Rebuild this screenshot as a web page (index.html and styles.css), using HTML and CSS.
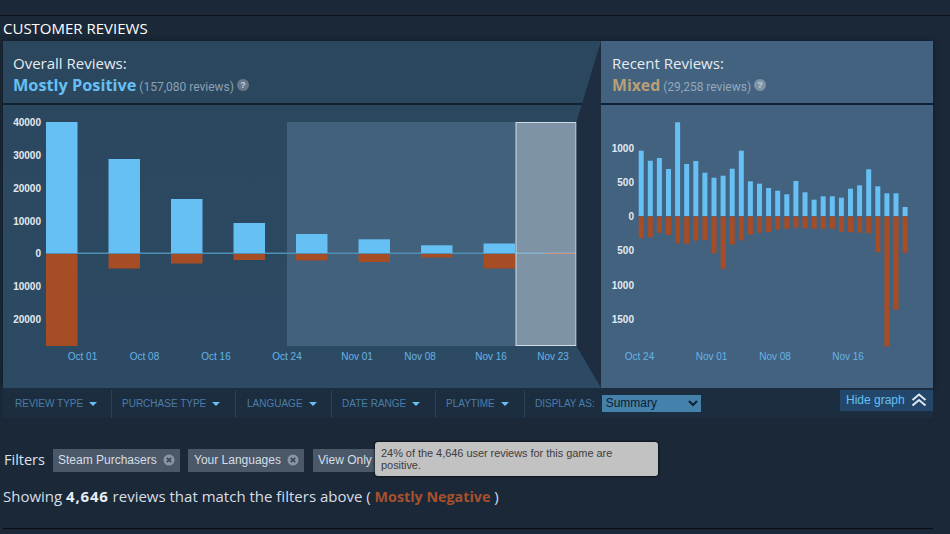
FILE: index.html
```html
<!DOCTYPE html>
<html lang="en">
<head>
<meta charset="utf-8">
<title>Customer Reviews</title>
<link rel="stylesheet" href="styles.css">
</head>
<body>
<main class="page">
  <h2 class="title">Customer Reviews</h2>
  <section class="graph">
    <div class="panels">
      <div class="panel overall">
        <header class="panel-head">
          <div class="panel-label">Overall Reviews:</div>
          <div class="summary"><span class="score positive">Mostly Positive</span> <span class="count">(157,080 reviews)</span> <span class="help">?</span></div>
        </header>
        <svg class="chart" viewBox="3 105 598 283" width="598" height="283">
          <rect class="range" x="287" y="122" width="289.5" height="224"/>
          <rect class="zero" x="46" y="252.5" width="530" height="1.5"/>
          <g class="up">
            <rect x="46" y="122" width="31.5" height="131"/>
            <rect x="108.5" y="159" width="31.5" height="94"/>
            <rect x="171" y="199" width="31.5" height="54"/>
            <rect x="233.5" y="223" width="31.5" height="30"/>
            <rect x="296" y="234" width="31.5" height="19"/>
            <rect x="358.5" y="239.3" width="31.5" height="13.7"/>
            <rect x="421" y="245.3" width="31.5" height="7.7"/>
            <rect x="483.5" y="243.5" width="31.5" height="9.5"/>
          </g>
          <g class="down">
            <rect x="46" y="254" width="31.5" height="92"/>
            <rect x="108.5" y="254" width="31.5" height="14.5"/>
            <rect x="171" y="254" width="31.5" height="9.5"/>
            <rect x="233.5" y="254" width="31.5" height="6"/>
            <rect x="296" y="254" width="31.5" height="6.5"/>
            <rect x="358.5" y="254" width="31.5" height="8"/>
            <rect x="421" y="254" width="31.5" height="3.5"/>
            <rect x="483.5" y="254" width="31.5" height="14.5"/>
          </g>
          <rect class="tiny" x="545" y="253" width="31" height="1"/>
          <rect class="selection" x="516" y="122.5" width="60" height="223"/>
          <g class="y-labels" text-anchor="end">
            <text x="41" y="126">40000</text>
            <text x="41" y="159">30000</text>
            <text x="41" y="192">20000</text>
            <text x="41" y="225">10000</text>
            <text x="41" y="257">0</text>
            <text x="41" y="290">10000</text>
            <text x="41" y="323">20000</text>
          </g>
          <g class="x-labels" text-anchor="middle">
            <text x="82.5" y="360">Oct 01</text>
            <text x="144.5" y="360">Oct 08</text>
            <text x="216" y="360">Oct 16</text>
            <text x="287" y="360">Oct 24</text>
            <text x="357" y="360">Nov 01</text>
            <text x="420" y="360">Nov 08</text>
            <text x="491" y="360">Nov 16</text>
            <text x="553" y="360">Nov 23</text>
          </g>
        </svg>
        <svg class="wedge" viewBox="3 41 598 347" width="598" height="347" aria-hidden="true">
          <polygon points="601,41 576.5,122 576.5,346 601,388"/>
        </svg>
      </div>
      <div class="panel recent">
        <header class="panel-head">
          <div class="panel-label">Recent Reviews:</div>
          <div class="summary"><span class="score mixed">Mixed</span> <span class="count">(29,258 reviews)</span> <span class="help">?</span></div>
        </header>
        <svg class="chart" viewBox="601 105 332 283" width="332" height="283">
          <g class="up">
            <rect x="638.7" y="150.7" width="5" height="65.3"/>
            <rect x="647.8" y="160.7" width="5" height="55.3"/>
            <rect x="656.9" y="158" width="5" height="58"/>
            <rect x="666" y="169" width="5" height="47"/>
            <rect x="675.1" y="122.3" width="5" height="93.7"/>
            <rect x="684.2" y="164" width="5" height="52"/>
            <rect x="693.3" y="161" width="5" height="55"/>
            <rect x="702.4" y="172.7" width="5" height="43.3"/>
            <rect x="711.5" y="177.7" width="5" height="38.3"/>
            <rect x="720.6" y="175.7" width="5" height="40.3"/>
            <rect x="729.7" y="168.7" width="5" height="47.3"/>
            <rect x="738.8" y="150.7" width="5" height="65.3"/>
            <rect x="747.9" y="181.3" width="5" height="34.7"/>
            <rect x="757" y="183.7" width="5" height="32.3"/>
            <rect x="766.1" y="188" width="5" height="28"/>
            <rect x="775.2" y="190.7" width="5" height="25.3"/>
            <rect x="784.3" y="194.3" width="5" height="21.7"/>
            <rect x="793.4" y="181" width="5" height="35"/>
            <rect x="802.5" y="192.3" width="5" height="23.7"/>
            <rect x="811.6" y="199.7" width="5" height="16.3"/>
            <rect x="820.7" y="196.3" width="5" height="19.7"/>
            <rect x="829.8" y="196.3" width="5" height="19.7"/>
            <rect x="838.9" y="197.7" width="5" height="18.3"/>
            <rect x="848" y="188.7" width="5" height="27.3"/>
            <rect x="857.1" y="185.3" width="5" height="30.7"/>
            <rect x="866.2" y="169.3" width="5" height="46.7"/>
            <rect x="875.3" y="186.3" width="5" height="29.7"/>
            <rect x="884.4" y="193.3" width="5" height="22.7"/>
            <rect x="893.5" y="193.3" width="5" height="22.7"/>
            <rect x="902.6" y="207" width="5" height="9"/>
          </g>
          <g class="down">
            <rect x="638.7" y="216.5" width="5" height="21.7"/>
            <rect x="647.8" y="216.5" width="5" height="20.7"/>
            <rect x="656.9" y="216.5" width="5" height="16.3"/>
            <rect x="666" y="216.5" width="5" height="18.3"/>
            <rect x="675.1" y="216.5" width="5" height="26.7"/>
            <rect x="684.2" y="216.5" width="5" height="27.3"/>
            <rect x="693.3" y="216.5" width="5" height="24"/>
            <rect x="702.4" y="216.5" width="5" height="23.3"/>
            <rect x="711.5" y="216.5" width="5" height="36.7"/>
            <rect x="720.6" y="216.5" width="5" height="52.3"/>
            <rect x="729.7" y="216.5" width="5" height="28"/>
            <rect x="738.8" y="216.5" width="5" height="24"/>
            <rect x="747.9" y="216.5" width="5" height="18"/>
            <rect x="757" y="216.5" width="5" height="16.3"/>
            <rect x="766.1" y="216.5" width="5" height="15.7"/>
            <rect x="775.2" y="216.5" width="5" height="13"/>
            <rect x="784.3" y="216.5" width="5" height="12.3"/>
            <rect x="793.4" y="216.5" width="5" height="11.3"/>
            <rect x="802.5" y="216.5" width="5" height="11.7"/>
            <rect x="811.6" y="216.5" width="5" height="12.3"/>
            <rect x="820.7" y="216.5" width="5" height="12.3"/>
            <rect x="829.8" y="216.5" width="5" height="12.3"/>
            <rect x="838.9" y="216.5" width="5" height="15.7"/>
            <rect x="848" y="216.5" width="5" height="15.7"/>
            <rect x="857.1" y="216.5" width="5" height="16.3"/>
            <rect x="866.2" y="216.5" width="5" height="16.7"/>
            <rect x="875.3" y="216.5" width="5" height="35.7"/>
            <rect x="884.4" y="216.5" width="5" height="130"/>
            <rect x="893.5" y="216.5" width="5" height="93.3"/>
            <rect x="902.6" y="216.5" width="5" height="36.3"/>
          </g>
          <g class="y-labels" text-anchor="end">
            <text x="634" y="152">1000</text>
            <text x="634" y="186">500</text>
            <text x="634" y="220">0</text>
            <text x="634" y="254">500</text>
            <text x="634" y="289">1000</text>
            <text x="634" y="323">1500</text>
          </g>
          <g class="x-labels" text-anchor="middle">
            <text x="639.5" y="360">Oct 24</text>
            <text x="711.5" y="360">Nov 01</text>
            <text x="775" y="360">Nov 08</text>
            <text x="848" y="360">Nov 16</text>
          </g>
        </svg>
      </div>
    </div>
    <div class="filterbar">
      <div class="menu first">Review Type <span class="caret"></span></div>
      <div class="menu type">Purchase Type <span class="caret"></span></div>
      <div class="menu lang">Language <span class="caret"></span></div>
      <div class="menu range-menu">Date Range <span class="caret"></span></div>
      <div class="menu play">Playtime <span class="caret"></span></div>
      <div class="menu display">
        <span>Display As:</span>
        <select class="display-select"><option>Summary</option></select>
      </div>
      <div class="hide-graph">Hide graph
        <svg class="chevrons" viewBox="0 0 16 14" width="16" height="14" aria-hidden="true">
          <path d="M1.5 7 8 1.5 14.500 7M1.500 12.500 8 7l6.500 5.500"/>
        </svg>
      </div>
    </div>
  </section>
  <section class="filters">
    <span class="filters-label">Filters</span>
    <span class="tag">Steam Purchasers
      <svg class="close" viewBox="0 0 12 12" width="12" height="12" aria-hidden="true"><circle cx="6" cy="6" r="5.500"/><path d="M3.800 3.800l4.400 4.400M8.200 3.800 3.800 8.200"/></svg>
    </span>
    <span class="tag">Your Languages
      <svg class="close" viewBox="0 0 12 12" width="12" height="12" aria-hidden="true"><circle cx="6" cy="6" r="5.500"/><path d="M3.800 3.800l4.400 4.400M8.200 3.800 3.800 8.200"/></svg>
    </span>
    <span class="tag">View Only</span>
    <div class="tooltip">24% of the 4,646 user reviews for this game are positive.</div>
  </section>
  <p class="showing">Showing <b>4,646</b> reviews that match the filters above ( <span class="negative">Mostly Negative</span> )</p>
  <hr class="rule">
</main>
</body>
</html>
```

FILE: styles.css
```css
* { box-sizing: border-box; }
html, body { margin: 0; height: 534px; overflow: hidden; background: #1b2838; }
body { font-family: "Open Sans", "Liberation Sans", sans-serif; color: #d6dee6; }
.page { padding-top: 15px; }
.title {
  margin: 0;
  height: 26px;
  padding: 3px 0 0 3px;
  border-top: 1px solid #0c121b;
  font-size: 15px;
  line-height: 18px;
  font-weight: 400;
  text-transform: uppercase;
  color: #fff;
}
.graph { width: 930px; margin-left: 3px; }
.panels { display: flex; height: 347px; box-shadow: 0 0 6px rgba(0,0,0,.35); }
.panel { position: relative; flex: none; }
.overall { width: 598px; background: linear-gradient(to bottom, #2a475e, #2d4a64); }
.recent { width: 332px; background: #426280; }
.panel-head { height: 64px; padding: 12px 10px 0; border-bottom: 2px solid #12212f; }
.recent .panel-head { padding-left: 11px; }
.panel-label { font-size: 15px; line-height: 20px; color: #e6ebef; }
.summary { display: flex; align-items: baseline; gap: 3px; margin-top: 1px; line-height: 22px; }
.score { font-size: 16.300px; font-weight: 700; }
.positive { color: #66c0f4; }
.mixed { color: #b9a074; font-size: 15.800px; }
.count { font-family: Roboto, "Liberation Sans", sans-serif; font-size: 12px; color: #8ba1b4; }
.recent .count { color: #93a9bd; }
.help {
  width: 12px; height: 12px; border-radius: 50%;
  background: #66788a; color: #c3ced8;
  font: 700 9px/12px "Liberation Sans", sans-serif; text-align: center;
  align-self: center; margin-top: -3px;
}
.recent .help { background: #7d93a6; }
.chart { display: block; }
.wedge { position: absolute; left: 0; top: 0; pointer-events: none; }
.wedge polygon { fill: #1e2d3f; }
.range { fill: #41617c; }
.zero { fill: #4f8fb3; }
.up rect { fill: #66c0f4; }
.down rect { fill: #a64d26; }
.selection { fill: rgba(255,255,255,.32); stroke: #cfdde7; stroke-width: 1; }
.tiny { fill: #b5603a; }
.y-labels text { font: 700 10px "Liberation Sans", sans-serif; fill: #e4eaef; }
.x-labels text { font: 400 10px "Liberation Sans", sans-serif; fill: #66b4e6; }
.filterbar {
  display: flex; align-items: center; position: relative;
  height: 30px; padding-top: 2px; background: #1d2d40;
  font: 10px/14px "Liberation Sans", sans-serif;
  color: #4a7ea8; text-transform: uppercase;
}
.menu { display: flex; align-items: center; gap: 6px; height: 28px; padding: 0 15px 0 12px; border-right: 1px solid #2b4159; white-space: nowrap; }
.first { width: 109px; }
.type { width: 124px; padding-left: 10px; }
.lang { width: 96px; padding-left: 11px; }
.range-menu { width: 104px; padding-left: 10px; }
.play { width: 89px; padding-left: 10px; }
.display { border-right: 0; padding-left: 10px; gap: 7px; }
.caret { width: 0; height: 0; border: 4.500px solid transparent; border-top: 4.500px solid #66c0f4; border-bottom: 0; }
.display-select {
  width: 99px; height: 17px; padding: 0; margin-top: -2px;
  background: #4582ab; color: #10202f; border: 0;
  font: 12px "Liberation Sans", sans-serif;
}
.hide-graph {
  display: flex; align-items: center; gap: 6px;
  position: absolute; right: 0; top: 2px;
  width: 93px; height: 21px; padding: 0 0 2px 6px;
  background: #23476a; color: #66c0f4;
  font-size: 12px; line-height: 16px; text-transform: none;
}
.chevrons { fill: none; stroke: #dfe9f1; stroke-width: 2; }
.filters { position: relative; display: flex; align-items: center; gap: 8px; height: 24px; margin: 30px 0 0 3px; }
.filters-label { font-size: 14.500px; width: 42px; color: #dbe3ea; margin: -2px 0 0 1px; }
.tag {
  display: flex; align-items: center; justify-content: space-between;
  height: 23px; padding: 0 5px;
  background: #4a5868; color: #d6dee6;
  font: 12px/23px "Liberation Sans", sans-serif;
}
.tag:nth-of-type(2) { width: 127px; margin-left: -1px; }
.tag:nth-of-type(3) { width: 116px; padding-left: 6px; }
.tag:nth-of-type(4) { width: 76px; margin-left: 1px; }
.close circle { fill: #8a95a1; }
.close path { stroke: #3b4857; stroke-width: 1.700; fill: none; }
.tooltip {
  position: absolute; left: 372px; top: -6px;
  width: 283px; height: 34px; padding: 5px 6px;
  background: #c2c2c2; color: #3d3d3f; border-radius: 3px;
  box-shadow: 0 0 3px #000;
  font: 11px/12px "Liberation Sans", sans-serif;
  letter-spacing: -.05px;
}
.showing { margin: 14px 0 0 3px; font-size: 15px; line-height: 20px; color: #d6dee6; }
.showing b { color: #e8eef3; letter-spacing: .8px; }
.negative { color: #a8502c; font-weight: 700; font-size: 14.300px; }
.rule { width: 930px; height: 1px; margin: 21px 0 0 3px; border: 0; background: #0a0e14; }
```
